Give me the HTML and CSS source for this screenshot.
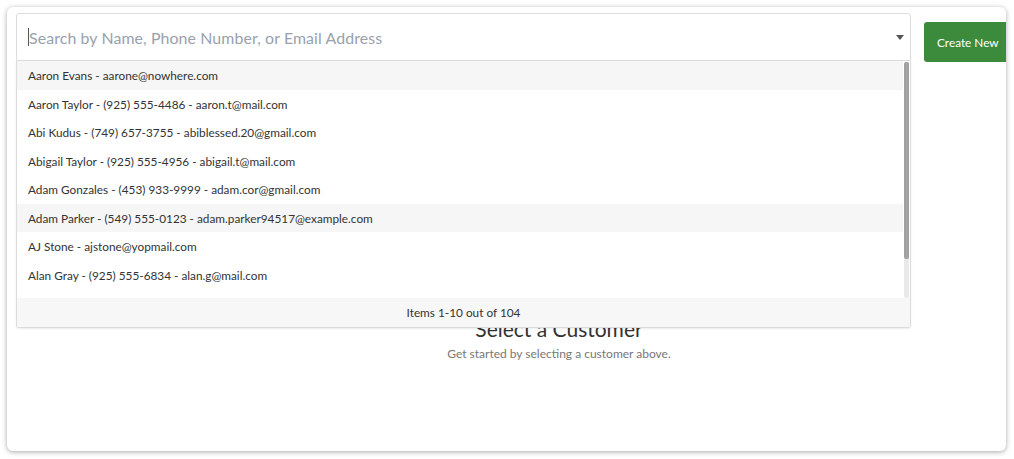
FILE: index.html
```html
<!DOCTYPE html>
<html>

<head>
    <title>Select a Customer</title>
    <link rel="stylesheet" href="styles.css">
</head>

<body>
    <div class="card">
        <div class="card-inner">
            <div class="search-row">
                <div class="search-box">
                    <div class="search-input">
                        <span class="caret-line"></span>
                        <span class="placeholder">Search by Name, Phone Number, or Email Address</span>
                        <span class="arrow"></span>
                    </div>
                    <div class="dropdown">
                        <div class="dropdown-list">
                            <ul class="options">
                                <li class="option active">Aaron Evans - aarone@nowhere.com</li>
                                <li class="option">Aaron Taylor - (925) 555-4486 - aaron.t@mail.com</li>
                                <li class="option">Abi Kudus - (749) 657-3755 - abiblessed.20@gmail.com</li>
                                <li class="option">Abigail Taylor - (925) 555-4956 - abigail.t@mail.com</li>
                                <li class="option">Adam Gonzales - (453) 933-9999 - adam.cor@gmail.com</li>
                                <li class="option hover">Adam Parker - (549) 555-0123 - adam.parker94517@example.com</li>
                                <li class="option">AJ Stone - ajstone@yopmail.com</li>
                                <li class="option">Alan Gray - (925) 555-6834 - alan.g@mail.com</li>
                            </ul>
                            <div class="scrollbar"><div class="thumb"></div></div>
                        </div>
                        <div class="dropdown-footer">Items 1-10 out of 104</div>
                    </div>
                </div>
                <button type="button" class="btn-create">Create New</button>
            </div>

            <div class="empty-state">
                <h2>Select a Customer</h2>
                <p>Get started by selecting a customer above.</p>
            </div>
        </div>
    </div>
</body>

</html>
```
FILE: styles.css
```css
body {
    margin: 0;
    padding: 7px 8px 8px 7px;
    background: #fff;
    font-family: Lato, "Open Sans", Arial, sans-serif;
    color: #333;
}

.card {
    height: 444px;
    border-radius: 6px;
    background: #fff;
    box-shadow: 0 1px 5px rgba(0, 0, 0, 0.35);
    overflow: hidden;
}

.card-inner {
    width: 1086px;
    padding: 6px 9px;
}

.search-row {
    display: flex;
    align-items: flex-start;
    gap: 13px;
}

.search-box {
    position: relative;
    width: 895px;
}

.search-input {
    display: flex;
    align-items: center;
    height: 46px;
    border: 1px solid #dcdcdc;
    border-radius: 3px 3px 0 0;
    padding: 0 11px;
}

.caret-line {
    width: 1px;
    height: 18px;
    background: #555;
}

.placeholder {
    flex: 1;
    font-size: 15.9px;
    color: #99a1ad;
    letter-spacing: 0.1px;
}

.arrow {
    width: 0;
    height: 0;
    border-left: 4.5px solid transparent;
    border-right: 4.5px solid transparent;
    border-top: 5px solid #555;
    margin-right: -5px;
}

.dropdown {
    position: absolute;
    top: 48px;
    left: 0;
    right: 0;
    background: #fff;
    border: 1px solid #dcdcdc;
    border-top: none;
    border-radius: 0 0 3px 3px;
    box-shadow: 0 1px 2px rgba(0, 0, 0, 0.08);
    z-index: 2;
}

.dropdown-list {
    position: relative;
    height: 237px;
    overflow: hidden;
}

.options {
    list-style: none;
    margin: 0;
    padding: 0;
    margin-right: 7px;
}

.option {
    height: 28.5px;
    line-height: 29px;
    padding-left: 11px;
    font-size: 11.8px;
    color: #333;
    white-space: nowrap;
}

.option.active,
.option.hover {
    background: #f6f6f6;
}

.scrollbar {
    position: absolute;
    top: 1px;
    right: 1px;
    bottom: 0;
    width: 5px;
    background: #e9e9e9;
    border-radius: 2px;
}

.thumb {
    height: 197px;
    background: #a2a2a2;
    border-radius: 2px;
}

.dropdown-footer {
    height: 29px;
    line-height: 30px;
    background: #f7f7f7;
    text-align: center;
    font-size: 11.8px;
    color: #333;
}

.btn-create {
    margin-top: 9px;
    height: 40px;
    padding: 0 13px;
    background: #3c8a3c;
    color: #fff;
    border: none;
    border-radius: 3px;
    font-family: inherit;
    font-size: 11.8px;
    cursor: pointer;
}

.empty-state {
    text-align: center;
    padding-top: 254px;
}

.empty-state h2 {
    margin: 0;
    font-size: 21px;
    font-weight: 400;
    color: #333;
    line-height: 26px;
}

.empty-state p {
    margin: 4px 0 0;
    font-size: 12px;
    color: #777;
}
```
